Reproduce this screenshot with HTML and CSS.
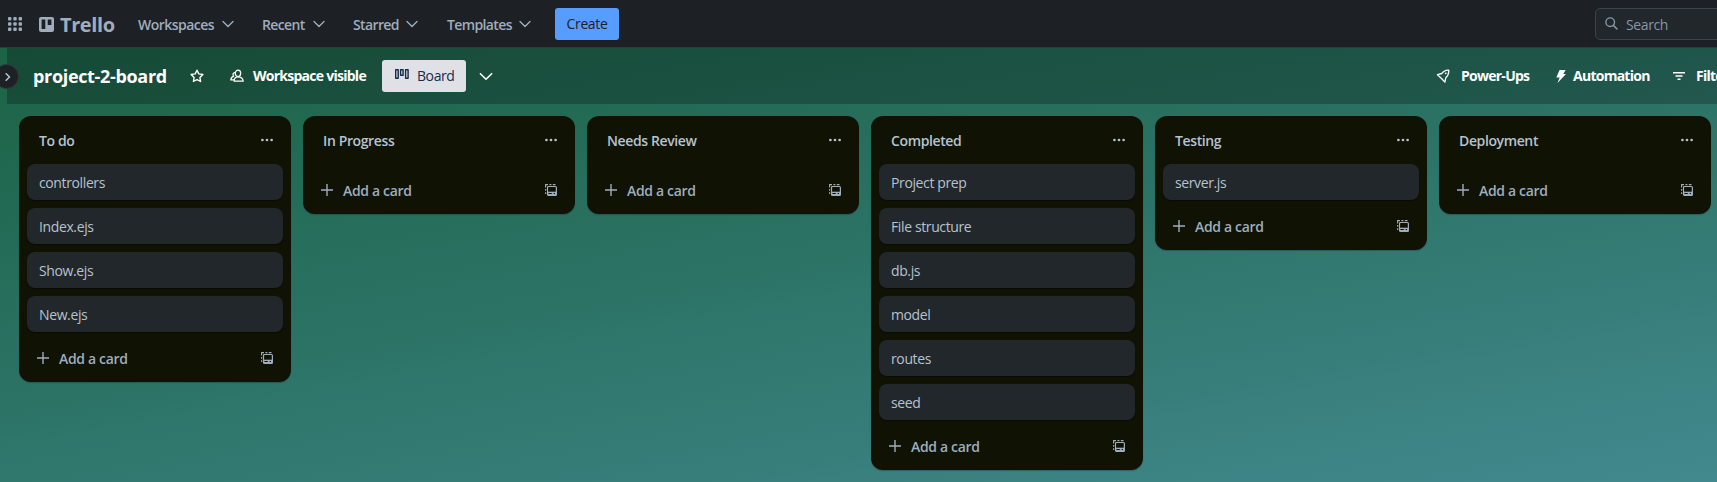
FILE: index.html
```html
<!DOCTYPE html>
<html lang="en">
<head>
<meta charset="utf-8">
<title>project-2-board | Trello</title>
<link rel="stylesheet" href="styles.css">
</head>
<body>
<svg class="defs" width="0" height="0">
  <symbol id="chev" viewBox="0 0 12 8"><path d="M1 1.500l5 5 5-5" fill="none" stroke="currentColor" stroke-width="1.400" stroke-linecap="round" stroke-linejoin="round"/></symbol>
  <symbol id="dots" viewBox="0 0 12 4"><circle cx="1.400" cy="2" r="1.350"/><circle cx="6" cy="2" r="1.350"/><circle cx="10.600" cy="2" r="1.350"/></symbol>
  <symbol id="plus" viewBox="0 0 12 12"><path d="M6 0v12M0 6h12" fill="none" stroke="currentColor" stroke-width="1.400"/></symbol>
  <symbol id="tpl" viewBox="0 0 12 12"><path d="M.6 10V8.200M.6 6.800V5M.6 3.600V.6H3M4.400 .6H6.400M7.800 .6H10.500" fill="none" stroke="currentColor" stroke-width="1.100"/><rect x="2.500" y="2.500" width="8.900" height="8.900" rx="1" fill="none" stroke="currentColor" stroke-width="1.200"/><path d="M2.500 7.700h8.900v3.700H2.500z"/><path class="slot" d="M3.400 9h3.400v1.100H3.400zM8.600 9h1.400v1.100H8.600z"/></symbol>
</svg>
<header class="nav">
  <svg class="apps" viewBox="0 0 14 14"><g id="r"><rect width="3.400" height="3.400" rx="1"/><rect x="5.300" width="3.400" height="3.400" rx="1"/><rect x="10.600" width="3.400" height="3.400" rx="1"/></g><use href="#r" y="5.300"/><use href="#r" y="10.600"/></svg>
  <div class="logo">
    <svg viewBox="0 0 15 15"><path fill-rule="evenodd" d="M2 0h11a2 2 0 0 1 2 2v11a2 2 0 0 1-2 2H2a2 2 0 0 1-2-2V2a2 2 0 0 1 2-2zM2.600 2.600v9.400h3.700V2.600zM8.700 2.600v5.400h3.700V2.600z"/></svg>
    <span>Trello</span>
  </div>
  <div class="menu m1"><span>Workspaces</span><svg><use href="#chev"/></svg></div>
  <div class="menu m2"><span>Recent</span><svg><use href="#chev"/></svg></div>
  <div class="menu m3"><span>Starred</span><svg><use href="#chev"/></svg></div>
  <div class="menu m4"><span>Templates</span><svg><use href="#chev"/></svg></div>
  <div class="create"><span>Create</span></div>
  <div class="search"><svg viewBox="0 0 13 13"><circle cx="5.200" cy="5.200" r="4.300" fill="none" stroke="currentColor" stroke-width="1.400"/><path d="M8.400 8.400l3.600 3.600" stroke="currentColor" stroke-width="1.500" stroke-linecap="round"/></svg><span>Search</span></div>
</header>
<main class="workspace">
  <aside class="rail"><div class="toggle"><svg viewBox="0 0 6 8"><path d="M1.200 .8L4.500 4 1.200 7.200" fill="none" stroke="currentColor" stroke-width="1.600" stroke-linecap="round" stroke-linejoin="round"/></svg></div></aside>
  <section class="board">
    <div class="bar">
      <h1>project-2-board</h1>
      <svg class="star" viewBox="0 0 14 14"><path d="M7 1.200l1.800 3.700 4.100.6-3 2.900.7 4.100L7 10.600l-3.600 1.900.7-4.100-3-2.900 4.100-.6z" fill="none" stroke="currentColor" stroke-width="1.400" stroke-linejoin="round"/></svg>
      <svg class="people" viewBox="0 0 14 14"><ellipse cx="8" cy="4.300" rx="2.700" ry="3.200" fill="none" stroke="currentColor" stroke-width="1.250"/><path d="M4.100 12.200c0-2.900 1.500-4.300 3.900-4.300s4.900 1.400 5.200 4.300zM5 3.600C3 3.500 2.300 5.700 3.700 7.300 1.900 7.700.8 9 .8 10.900h3" fill="none" stroke="currentColor" stroke-width="1.250" stroke-linejoin="round"/></svg>
      <span class="visible">Workspace visible</span>
      <div class="view"><svg viewBox="0 0 14 11"><path d="M.7.700h2.500v8.600H.700zM5.600.700h2.500v5.600H5.600zM10.600.700h2.500v8.600h-2.500z" fill="none" stroke="currentColor" stroke-width="1.400" stroke-linejoin="round"/></svg><span>Board</span></div>
      <svg class="more"><use href="#chev"/></svg>
      <div class="tools">
        <svg class="rocket" viewBox="0 0 14 14"><path d="M12.700 1.100C9.900.900 7.600 2 5.900 4.500L1.400 5.700l2.200 2 2.600 2.500 2.700 2.900.9-4.400c2.300-2 3.200-4.500 2.900-7.600z" fill="none" stroke="currentColor" stroke-width="1.300" stroke-linejoin="round"/><circle cx="9.700" cy="4.300" r=".9"/></svg>
        <span class="power">Power-Ups</span>
        <svg class="bolt" viewBox="0 0 10 13"><path d="M3.600 0h6L7.300 4H10L1.500 13 3.700 7.500H.3z"/></svg>
        <span class="auto">Automation</span>
        <svg class="filter" viewBox="0 0 12 8"><path d="M0 .75h12M2.500 4h7M4.500 7.250h3" stroke="currentColor" stroke-width="1.400"/></svg>
        <span>Filters</span>
      </div>
    </div>
    <div class="lists">
      <article class="list"><header><h2>To do</h2><svg><use href="#dots"/></svg></header>
        <ul><li>controllers</li><li>Index.ejs</li><li>Show.ejs</li><li>New.ejs</li></ul>
        <footer><svg><use href="#plus"/></svg><span>Add a card</span><svg><use href="#tpl"/></svg></footer></article>
      <article class="list"><header><h2>In Progress</h2><svg><use href="#dots"/></svg></header>
        <footer><svg><use href="#plus"/></svg><span>Add a card</span><svg><use href="#tpl"/></svg></footer></article>
      <article class="list"><header><h2>Needs Review</h2><svg><use href="#dots"/></svg></header>
        <footer><svg><use href="#plus"/></svg><span>Add a card</span><svg><use href="#tpl"/></svg></footer></article>
      <article class="list"><header><h2>Completed</h2><svg><use href="#dots"/></svg></header>
        <ul><li>Project prep</li><li>File structure</li><li>db.js</li><li>model</li><li>routes</li><li>seed</li></ul>
        <footer><svg><use href="#plus"/></svg><span>Add a card</span><svg><use href="#tpl"/></svg></footer></article>
      <article class="list"><header><h2>Testing</h2><svg><use href="#dots"/></svg></header>
        <ul><li>server.js</li></ul>
        <footer><svg><use href="#plus"/></svg><span>Add a card</span><svg><use href="#tpl"/></svg></footer></article>
      <article class="list"><header><h2>Deployment</h2><svg><use href="#dots"/></svg></header>
        <footer><svg><use href="#plus"/></svg><span>Add a card</span><svg><use href="#tpl"/></svg></footer></article>
    </div>
  </section>
</main>
</body>
</html>
```
FILE: styles.css
```css
* { box-sizing: border-box; }
body {
  margin: 0;
  height: 482px;
  overflow: hidden;
  display: flex;
  flex-direction: column;
  font: 14px/20px "Segoe UI", "Open Sans", "Noto Sans", sans-serif;
  letter-spacing: -0.38px;
  color: #9fadbc;
  white-space: nowrap;
}
svg { display: block; flex: none; fill: currentColor; }
.defs { position: absolute; }
h1, h2, ul { margin: 0; padding: 0; }

.nav {
  height: 48px;
  flex: none;
  display: flex;
  align-items: center;
  padding-left: 8px;
  background: #1d2125;
  border-bottom: 1px solid #37383c;
}
.apps { width: 14px; height: 14px; }
.logo { display: flex; align-items: center; gap: 6px; width: 92px; margin-left: 17px; padding-top: 1px; }
.logo svg { width: 15px; height: 15px; }
.logo span { font-size: 20px; font-weight: 700; letter-spacing: -0.4px; padding-top: 1px; }
.menu { display: flex; align-items: center; justify-content: space-between; font-weight: 600; letter-spacing: -0.62px; margin-left: 7px; padding-top: 1px; }
.menu span { padding-top: 1px; }
.menu svg { width: 12px; height: 8px; }
.m1 { width: 96px; letter-spacing: -0.52px; }
.m2 { width: 63px; margin-left: 28px; }
.m3 { width: 65px; margin-left: 28px; }
.m4 { width: 84px; margin-left: 29px; }
.create {
  width: 64px;
  height: 32px;
  margin-left: 24px;
  padding-top: 1px;
  display: flex;
  align-items: center;
  justify-content: center;
  background: #579dff;
  border-radius: 3px;
  color: #1d2125;
  font-weight: 500;
}
.search {
  flex: none;
  width: 180px;
  height: 32px;
  margin-left: auto;
  margin-right: -58px;
  display: flex;
  align-items: center;
  gap: 8px;
  padding-left: 9px;
  background: #22272b;
  border: 1px solid #3a444c;
  border-radius: 5px;
  color: #8696a7;
}
.search svg { width: 13px; height: 13px; }
.search span { padding-top: 2px; }

.workspace {
  flex: 1;
  min-height: 0;
  display: flex;
  background: linear-gradient(169.5deg, #1c6346 0%, #2b7264 45%, #42898f 100%);
}
.rail { width: 7px; flex: none; padding-top: 16px; }
.toggle {
  position: relative;
  z-index: 1;
  width: 25px;
  height: 25px;
  margin-left: -6px;
  display: flex;
  align-items: center;
  justify-content: center;
  background: #1d2125;
  border: 1px solid #33383c;
  border-radius: 50%;
  color: #b6c2cf;
}
.toggle svg { width: 6px; height: 8px; margin-left: 2px; }
.board { flex: 1; min-width: 0; display: flex; flex-direction: column; }
.bar {
  height: 56px;
  flex: none;
  display: flex;
  align-items: center;
  padding-left: 26px;
  background: rgba(0, 0, 0, 0.24);
  color: #fff;
  font-weight: 700;
  letter-spacing: -0.74px;
}
.bar h1 { width: 157px; font-size: 18px; line-height: 24px; font-weight: 700; letter-spacing: -0.33px; }
.star { width: 14px; height: 14px; }
.people { width: 14px; height: 14px; margin-left: 26px; }
.visible { width: 120px; margin-left: 9px; }
.view {
  width: 84px;
  height: 32px;
  display: flex;
  align-items: center;
  gap: 8px;
  margin-left: 9px;
  padding-left: 13px;
  background: #dfe1e6;
  border-radius: 3px;
  color: #172b4d;
  font-weight: 400;
  letter-spacing: -0.42px;
}
.view svg { width: 14px; height: 11px; margin-bottom: 3px; }
.more { width: 14px; height: 9px; margin-left: 13px; }
.tools { display: flex; align-items: center; margin-left: auto; width: 281px; flex: none; }
.tools > * { flex: none; }
.rocket { width: 14px; height: 14px; }
.power { width: 72px; margin-left: 11px; }
.bolt { width: 10px; height: 13px; margin-left: 23px; }
.auto { width: 82px; margin-left: 7px; }
.filter { width: 12px; height: 8px; margin-left: 18px; margin-right: 11px; }

.lists { display: flex; align-items: flex-start; gap: 12px; padding: 12px; }
.list {
  width: 272px;
  flex: none;
  background: #101204;
  border-radius: 12px;
  box-shadow: 0 1px 1px rgba(9, 30, 66, 0.3);
}
.list header {
  height: 48px;
  display: flex;
  align-items: center;
  justify-content: space-between;
  padding: 0 18px 0 20px;
  color: #b6c2cf;
}
.list h2 { padding-top: 2px; font-size: 14px; font-weight: 600; line-height: 20px; }
.list header svg { width: 12px; height: 4px; }
.list ul { list-style: none; padding: 0 8px; display: grid; gap: 8px; }
.list li {
  height: 36px;
  padding: 9px 12px 7px;
  background: #22272b;
  border-radius: 8px;
  box-shadow: 0 1px 1px rgba(3, 4, 4, 0.5);
  color: #b6c2cf;
}
.list footer { height: 50px; display: flex; align-items: center; padding: 2px 18px 0; font-weight: 600; letter-spacing: -0.33px; }
.list footer svg { width: 12px; height: 12px; }
.list footer span { flex: 1; margin-left: 10px; padding-top: 1px; }
.slot { fill: #101204; }
```
